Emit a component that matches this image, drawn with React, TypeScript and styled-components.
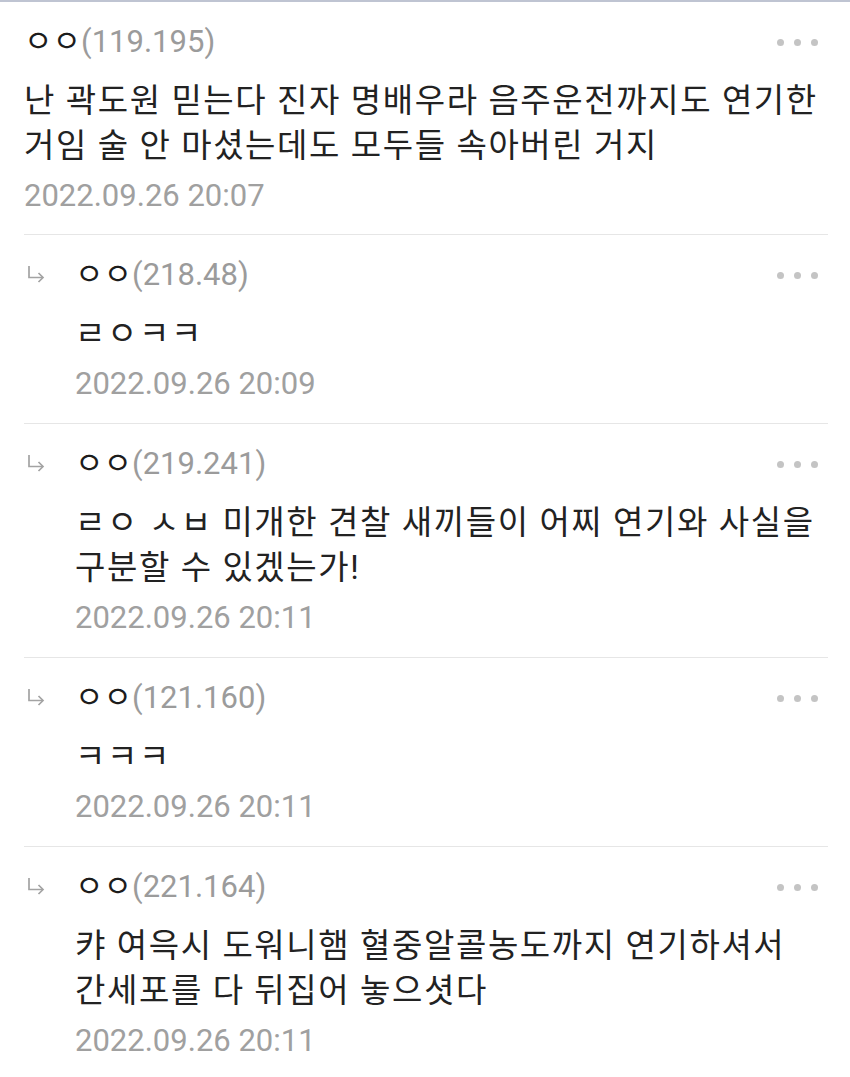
import React from 'react'
import styled, {createGlobalStyle} from 'styled-components'

type CommentData = {
  name: string
  ip: string
  body: string[]
  date: string
  reply?: boolean
}

const comments: CommentData[] = [
  {
    name: 'ㅇㅇ',
    ip: '119.195',
    body: ['난 곽도원 믿는다 진자 명배우라 음주운전까지도 연기한', '거임 술 안 마셨는데도 모두들 속아버린 거지'],
    date: '2022.09.26 20:07',
  },
  {name: 'ㅇㅇ', ip: '218.48', body: ['ㄹㅇㅋㅋ'], date: '2022.09.26 20:09', reply: true},
  {
    name: 'ㅇㅇ',
    ip: '219.241',
    body: ['ㄹㅇ ㅅㅂ 미개한 견찰 새끼들이 어찌 연기와 사실을', '구분할 수 있겠는가!'],
    date: '2022.09.26 20:11',
    reply: true,
  },
  {name: 'ㅇㅇ', ip: '121.160', body: ['ㅋㅋㅋ'], date: '2022.09.26 20:11', reply: true},
  {
    name: 'ㅇㅇ',
    ip: '221.164',
    body: ['캬 여윽시 도워니햄 혈중알콜농도까지 연기하셔서', '간세포를 다 뒤집어 놓으셧다'],
    date: '2022.09.26 20:11',
    reply: true,
  },
]

const GlobalStyle = createGlobalStyle`
  html, body {
    margin: 0;
    padding: 0;
    background: #ffffff;
  }
  body {
    font-family: Roboto, "Noto Sans CJK KR", sans-serif;
  }
`

function ReplyArrow() {
  return (
    <svg width="18" height="18" viewBox="0 0 18 18" fill="none">
      <path d="M2 1 V12.5 H16" stroke="#a3a3a3" strokeWidth="1.7" />
      <path d="M11.5 8 L16 12.5 L11.5 17" stroke="#a3a3a3" strokeWidth="1.7" />
    </svg>
  )
}

function Comment({data}: {data: CommentData}) {
  return (
    <Item reply={data.reply}>
      {data.reply && (
        <ArrowCol>
          <ReplyArrow />
        </ArrowCol>
      )}
      <Content>
        <Header>
          <Name>
            {data.name}
            <Ip>({data.ip})</Ip>
          </Name>
          <Dots>
            <Dot />
            <Dot />
            <Dot />
          </Dots>
        </Header>
        <Body>
          {data.body.map(line => (
            <Line key={line}>{line}</Line>
          ))}
        </Body>
        <DateText>{data.date}</DateText>
      </Content>
    </Item>
  )
}

export default function App() {
  return (
    <>
      <GlobalStyle />
      <Page>
        <List>
          {comments.map((c, i) => (
            <Comment key={`comment-${i}`} data={c} />
          ))}
        </List>
      </Page>
    </>
  )
}

const Page = styled.div`
  width: 850px;
  min-height: 1077px;
  border-top: 2px solid #bfc4d2;
  box-sizing: border-box;
  background: #fff;
`

const List = styled.div`
  padding: 0 22px 0 24px;
`

const Item = styled.div<{reply?: boolean}>`
  display: flex;
  padding: 20px 0 ${p => (p.reply ? '19px' : '18px')};
  border-bottom: 1px solid #e6e6e6;

  &:last-child {
    border-bottom: none;
  }
`

const ArrowCol = styled.div`
  width: 51px;
  flex-shrink: 0;
  display: flex;
  align-items: center;
  height: 40px;
  padding: 0 0 2px 3px;
  box-sizing: border-box;
`

const Content = styled.div`
  flex: 1;
  min-width: 0;
`

const Header = styled.div`
  display: flex;
  align-items: center;
  justify-content: space-between;
  height: 40px;
`

const Name = styled.div`
  font-size: 31px;
  color: #1c1c1c;
  line-height: 40px;
  white-space: nowrap;
`

const Ip = styled.span`
  color: #9b9b9b;
`

const Dots = styled.div`
  display: flex;
  gap: 10px;
  padding-right: 10px;
`

const Dot = styled.span`
  width: 7px;
  height: 7px;
  border-radius: 50%;
  background: #c4c4c4;
`

const Body = styled.div`
  margin-top: 16px;
  font-size: 33px;
  letter-spacing: 1.6px;
  line-height: 45px;
  color: #222;
`

const Line = styled.div`
  white-space: nowrap;
`

const DateText = styled.div`
  margin-top: 8px;
  font-size: 31px;
  line-height: 40px;
  color: #a0a0a0;
`
